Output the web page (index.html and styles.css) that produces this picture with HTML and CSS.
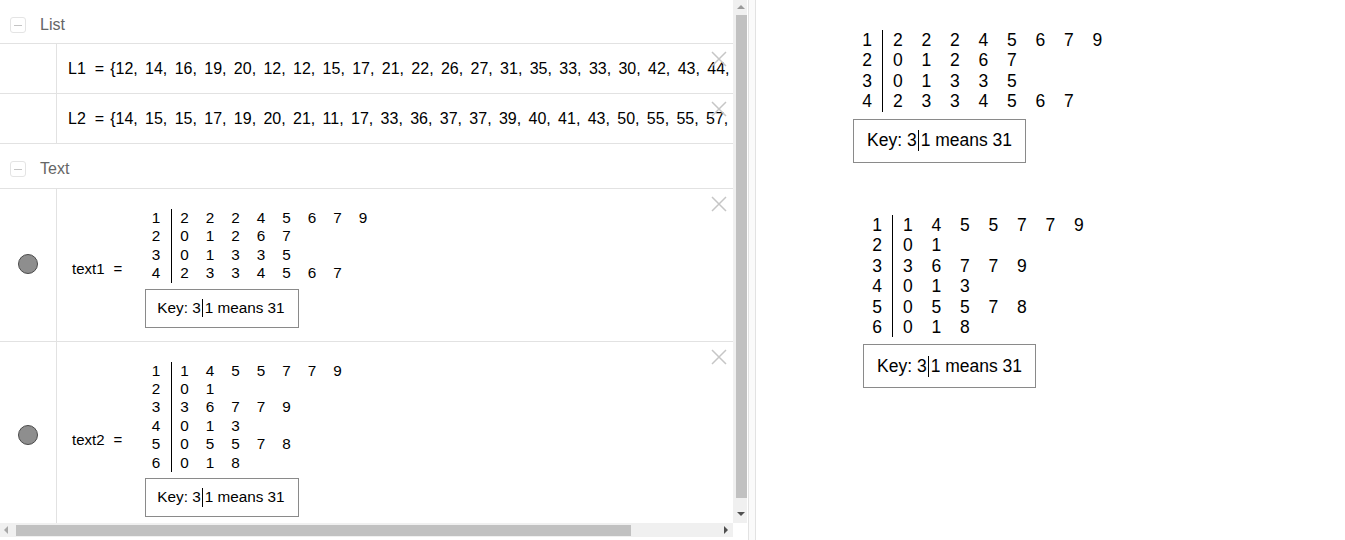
FILE: index.html
```html
<!DOCTYPE html>
<html lang="en">
<head>
    <meta charset="UTF-8">
    <meta name="viewport" content="width=device-width, initial-scale=1.0">
    <title>Stem and Leaf Plots</title>
    <link rel="stylesheet" href="styles.css">
</head>
<body>

<div class="app">
    <div class="algebra">
        <div class="av-view">
            <div class="av-content">

                <!-- List group -->
                <div class="group-header">
                    <span class="toggle"></span>
                    <span class="group-title">List</span>
                </div>
                <div class="av-row list-row">
                    <div class="marble-col"></div>
                    <div class="item">
                        <span>L1</span><span class="eq">=</span><span class="list-val">{12, 14, 16, 19, 20, 12, 12, 15, 17, 21, 22, 26, 27, 31, 35, 33, 33, 30, 42, 43, 44, 45, 46, 47, 43}</span>
                    </div>
                    <svg class="close" viewBox="0 0 16 16"><path d="M1 1L15 15M15 1L1 15"/></svg>
                </div>
                <div class="av-row list-row">
                    <div class="marble-col"></div>
                    <div class="item">
                        <span>L2</span><span class="eq">=</span><span class="list-val">{14, 15, 15, 17, 19, 20, 21, 11, 17, 33, 36, 37, 37, 39, 40, 41, 43, 50, 55, 55, 57, 58, 60, 61, 68}</span>
                    </div>
                    <svg class="close" viewBox="0 0 16 16"><path d="M1 1L15 15M15 1L1 15"/></svg>
                </div>

                <!-- Text group -->
                <div class="group-header text-header">
                    <span class="toggle"></span>
                    <span class="group-title">Text</span>
                </div>
                <div class="av-row text-row">
                    <div class="marble-col"><span class="marble"></span></div>
                    <div class="item">
                        <span>text1</span><span class="eq">=</span>
                        <div class="plot-block">
                            <div class="stemplot">
                                <div class="sl-row"><span class="stem">1</span><span class="leaves"><span>2</span><span>2</span><span>2</span><span>4</span><span>5</span><span>6</span><span>7</span><span>9</span></span></div>
                                <div class="sl-row"><span class="stem">2</span><span class="leaves"><span>0</span><span>1</span><span>2</span><span>6</span><span>7</span></span></div>
                                <div class="sl-row"><span class="stem">3</span><span class="leaves"><span>0</span><span>1</span><span>3</span><span>3</span><span>5</span></span></div>
                                <div class="sl-row"><span class="stem">4</span><span class="leaves"><span>2</span><span>3</span><span>3</span><span>4</span><span>5</span><span>6</span><span>7</span></span></div>
                            </div>
                            <div class="key">Key: 3<span class="mid"></span>1 means 31</div>
                        </div>
                    </div>
                    <svg class="close" viewBox="0 0 16 16"><path d="M1 1L15 15M15 1L1 15"/></svg>
                </div>
                <div class="av-row text-row">
                    <div class="marble-col"><span class="marble"></span></div>
                    <div class="item">
                        <span>text2</span><span class="eq">=</span>
                        <div class="plot-block">
                            <div class="stemplot">
                                <div class="sl-row"><span class="stem">1</span><span class="leaves"><span>1</span><span>4</span><span>5</span><span>5</span><span>7</span><span>7</span><span>9</span></span></div>
                                <div class="sl-row"><span class="stem">2</span><span class="leaves"><span>0</span><span>1</span></span></div>
                                <div class="sl-row"><span class="stem">3</span><span class="leaves"><span>3</span><span>6</span><span>7</span><span>7</span><span>9</span></span></div>
                                <div class="sl-row"><span class="stem">4</span><span class="leaves"><span>0</span><span>1</span><span>3</span></span></div>
                                <div class="sl-row"><span class="stem">5</span><span class="leaves"><span>0</span><span>5</span><span>5</span><span>7</span><span>8</span></span></div>
                                <div class="sl-row"><span class="stem">6</span><span class="leaves"><span>0</span><span>1</span><span>8</span></span></div>
                            </div>
                            <div class="key">Key: 3<span class="mid"></span>1 means 31</div>
                        </div>
                    </div>
                    <svg class="close" viewBox="0 0 16 16"><path d="M1 1L15 15M15 1L1 15"/></svg>
                </div>

            </div>
        </div>

        <!-- scrollbars -->
        <div class="vscroll">
            <span class="arrow arrow-up"></span>
            <span class="vthumb"></span>
            <span class="vspacer"></span>
            <span class="arrow arrow-down"></span>
        </div>
        <div class="hscroll">
            <div class="hbar">
                <span class="arrow arrow-left"></span>
                <span class="hthumb"></span>
                <span class="hspacer"></span>
                <span class="arrow arrow-right"></span>
            </div>
        </div>
        <div class="corner"></div>
    </div>

    <div class="splitter"></div>

    <div class="graphics">
        <div class="plot-block big plot-one">
            <div class="stemplot">
                <div class="sl-row"><span class="stem">1</span><span class="leaves"><span>2</span><span>2</span><span>2</span><span>4</span><span>5</span><span>6</span><span>7</span><span>9</span></span></div>
                <div class="sl-row"><span class="stem">2</span><span class="leaves"><span>0</span><span>1</span><span>2</span><span>6</span><span>7</span></span></div>
                <div class="sl-row"><span class="stem">3</span><span class="leaves"><span>0</span><span>1</span><span>3</span><span>3</span><span>5</span></span></div>
                <div class="sl-row"><span class="stem">4</span><span class="leaves"><span>2</span><span>3</span><span>3</span><span>4</span><span>5</span><span>6</span><span>7</span></span></div>
            </div>
            <div class="key">Key: 3<span class="mid"></span>1 means 31</div>
        </div>
        <div class="plot-block big plot-two">
            <div class="stemplot">
                <div class="sl-row"><span class="stem">1</span><span class="leaves"><span>1</span><span>4</span><span>5</span><span>5</span><span>7</span><span>7</span><span>9</span></span></div>
                <div class="sl-row"><span class="stem">2</span><span class="leaves"><span>0</span><span>1</span></span></div>
                <div class="sl-row"><span class="stem">3</span><span class="leaves"><span>3</span><span>6</span><span>7</span><span>7</span><span>9</span></span></div>
                <div class="sl-row"><span class="stem">4</span><span class="leaves"><span>0</span><span>1</span><span>3</span></span></div>
                <div class="sl-row"><span class="stem">5</span><span class="leaves"><span>0</span><span>5</span><span>5</span><span>7</span><span>8</span></span></div>
                <div class="sl-row"><span class="stem">6</span><span class="leaves"><span>0</span><span>1</span><span>8</span></span></div>
            </div>
            <div class="key">Key: 3<span class="mid"></span>1 means 31</div>
        </div>
    </div>
</div>

</body>
</html>
```

FILE: styles.css
```css
body {
    margin: 0;
    font-family: "Liberation Sans", Arial, sans-serif;
    color: #000;
    background: #fff;
    overflow: hidden;
}

.app {
    display: flex;
    width: 1345px;
    height: 540px;
}

/* ---------- algebra view ---------- */

.algebra {
    display: grid;
    grid-template-columns: 733px 14px;
    grid-template-rows: 523px 17px;
    flex: none;
}

.av-view {
    overflow: hidden;
    background: #fff;
}

.av-content {
    width: 733px;
}

.group-header {
    display: flex;
    align-items: center;
    height: 44px;
    border-bottom: 1px solid #e2e2e2;
    box-sizing: border-box;
    padding-top: 6px;
}

.text-header {
    height: 45px;
    padding-top: 5px;
}

.toggle {
    position: relative;
    width: 16px;
    height: 16px;
    margin-left: 10px;
    border: 1px solid #e4e4e4;
    border-radius: 3px;
    box-sizing: border-box;
}

.toggle::after {
    content: "";
    position: absolute;
    left: 3px;
    right: 3px;
    top: 7px;
    height: 1px;
    background: #c4c4c4;
}

.group-title {
    margin-left: 14px;
    font-size: 16px;
    color: #666;
}

.av-row {
    position: relative;
    display: flex;
    border-bottom: 1px solid #e2e2e2;
    white-space: nowrap;
}

.list-row {
    height: 49px;
}

.text-row {
    padding: 20px 0 13px;
}

.marble-col {
    flex: none;
    width: 56px;
    border-right: 1px solid #e2e2e2;
    display: flex;
    align-items: center;
    justify-content: center;
}

.text-row .marble-col {
    margin: -20px 0 -13px;
}

.marble {
    width: 18px;
    height: 18px;
    border-radius: 50%;
    background: #8e8e8e;
    border: 1px solid #4a4a4a;
    margin-top: -2px;
    margin-left: -1px;
}

.item {
    display: flex;
    align-items: center;
    padding-left: 11px;
    font-size: 16px;
}

.text-row .item {
    padding-left: 15px;
    font-size: 15px;
}

.eq {
    margin: 0 6px 0 9px;
}

.text-row .eq {
    margin: 0 23px 0 9px;
}

.list-val {
    word-spacing: 2.9px;
}

.close {
    position: absolute;
    top: 7px;
    right: 6px;
    width: 16px;
    height: 16px;
    fill: none;
    stroke: #c6c6c6;
    stroke-width: 1.5;
}

/* ---------- stem and leaf plot ---------- */

.plot-block {
    --row-h: 18.4px;
    --stem-w: 22px;
    --stem-pad: 11px;
    --leaf-pad: 8px;
    --leaf-w: 25.5px;
    --key-w: 154px;
    --key-h: 39px;
    --key-pad: 11px;
    font-size: 15.3px;
}

.plot-block.big {
    --row-h: 20.4px;
    --stem-w: 25px;
    --stem-pad: 10px;
    --leaf-pad: 10px;
    --leaf-w: 28.5px;
    --key-w: 173px;
    --key-h: 44px;
    --key-pad: 13px;
    font-size: 17.5px;
}

.stemplot {
    margin-left: 5px;
}

.sl-row {
    display: flex;
    height: var(--row-h);
    line-height: var(--row-h);
}

.stem {
    width: var(--stem-w);
    padding-right: var(--stem-pad);
    box-sizing: border-box;
    text-align: right;
    border-right: 1px solid #000;
}

.leaves {
    display: flex;
    padding-left: var(--leaf-pad);
}

.leaves span {
    width: var(--leaf-w);
}

.key {
    display: flex;
    align-items: center;
    width: var(--key-w);
    height: var(--key-h);
    margin-top: 6px;
    padding-left: var(--key-pad);
    box-sizing: border-box;
    border: 1px solid #8a8a8a;
    background: #fff;
}

.big .key {
    margin-top: 7px;
}

.mid {
    display: inline-block;
    width: 1px;
    height: 1.2em;
    margin: 0 2px 0 1px;
    background: #000;
}

/* ---------- scrollbars ---------- */

.vscroll {
    display: flex;
    flex-direction: column;
    align-items: center;
    background: #f0f0f0;
}

.vthumb {
    width: 11px;
    height: 483px;
    margin-left: 3px;
    background: #c1c1c1;
}

.vspacer,
.hspacer {
    flex: 1;
}

.hscroll {
    grid-column: 1;
}

.hbar {
    display: flex;
    align-items: center;
    height: 14px;
    background: #f0f0f0;
}

.hthumb {
    width: 615px;
    height: 11px;
    background: #c1c1c1;
}

.corner {
    background: #fff;
}

.arrow {
    width: 0;
    height: 0;
    flex: none;
}

.arrow-up {
    margin: 5px 0 6px 1px;
    border-left: 4px solid transparent;
    border-right: 4px solid transparent;
    border-bottom: 4px solid #9a9a9a;
}

.arrow-down {
    margin: 0 0 7px 1px;
    border-left: 4px solid transparent;
    border-right: 4px solid transparent;
    border-top: 4px solid #505050;
}

.arrow-left {
    margin: 0 8px 0 4px;
    border-top: 4px solid transparent;
    border-bottom: 4px solid transparent;
    border-right: 4px solid #a8a8a8;
}

.arrow-right {
    margin: 0 5px 0 0;
    border-top: 4px solid transparent;
    border-bottom: 4px solid transparent;
    border-left: 4px solid #505050;
}

/* ---------- splitter and graphics ---------- */

.splitter {
    flex: none;
    width: 6px;
    margin-left: 1px;
    border-left: 1px solid #e2e2e2;
    border-right: 1px solid #e2e2e2;
    background: #fafafa;
}

.graphics {
    position: relative;
    flex: 1;
    background: #fff;
}

.plot-block.big {
    position: absolute;
}

.plot-one {
    left: 97px;
    top: 30px;
}

.plot-two {
    left: 107px;
    top: 215px;
}
```
